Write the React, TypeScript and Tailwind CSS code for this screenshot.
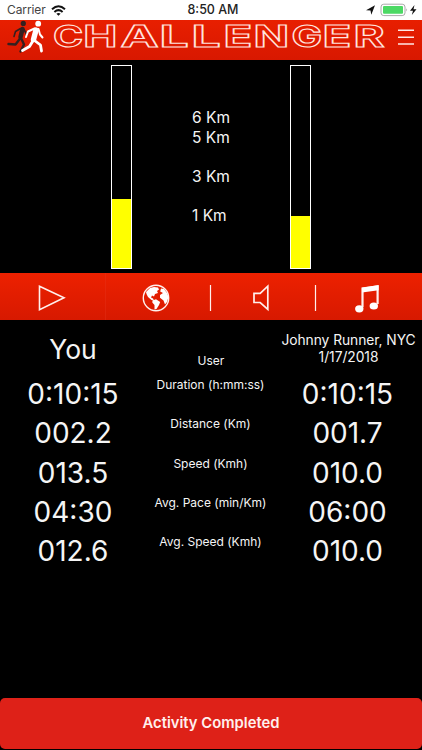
import React from "react";

interface Stat {
  label: string;
  you: string;
  rival: string;
}

const stats: Stat[] = [
  { label: "Duration (h:mm:ss)", you: "0:10:15", rival: "0:10:15" },
  { label: "Distance (Km)", you: "002.2", rival: "001.7" },
  { label: "Speed (Kmh)", you: "013.5", rival: "010.0" },
  { label: "Avg. Pace (min/Km)", you: "04:30", rival: "06:00" },
  { label: "Avg. Speed (Kmh)", you: "012.6", rival: "010.0" },
];

// letter, left edge, horizontal stretch
const logo: [string, number, number][] = [
  ["C", 53, 1.36],
  ["H", 83.3, 1.52],
  ["A", 120.5, 1.7],
  ["L", 159.4, 1.72],
  ["L", 191.4, 1.72],
  ["E", 223.4, 1.58],
  ["N", 253.4, 1.56],
  ["G", 291.5, 1.36],
  ["E", 322.4, 1.58],
  ["R", 353.4, 1.58],
];

const StatusBar = () => (
  <div className="flex h-5 items-center bg-white text-[#222]">
    <div className="flex w-[141px] items-center gap-[5px] pl-[7px]">
      <span className="text-[12px] leading-5 tracking-[-0.1px] text-[#444]">Carrier</span>
      <svg width="15" height="11" viewBox="0 0 15 11" fill="none" stroke="#111" strokeWidth="2">
        <path d="M1 4.2Q7.5-1.6 14 4.2M3.4 6.9Q7.5 3.4 11.6 6.9" />
        <path d="M5.4 8.8Q7.5 7.2 9.6 8.8L7.5 10.8z" fill="#111" stroke="none" />
      </svg>
    </div>
    <div className="w-[144px] text-center text-[12.5px] leading-5 font-medium">8:50 AM</div>
    <div className="flex flex-1 items-center justify-end pr-[4px]">
      <svg width="53" height="14" viewBox="0 0 53 14">
        <path d="M1 7.2L10 2.2 6.3 11.8 5.5 7.4z" fill="#111" />
        <rect x="16" y="1.2" width="24" height="11.4" rx="2.8" fill="white" stroke="#aaa" />
        <rect x="18" y="3" width="20" height="7.8" rx="1" fill="#4cd964" />
        <path d="M41.4 5.3q1.5 1.6 0 3.2z" fill="#999" />
        <path d="M49.5 2L45 7.7h3L46.8 12 51.5 6.3h-3z" fill="#111" />
      </svg>
    </div>
  </div>
);

const Header = () => (
  <header className="h-10 bg-gradient-to-b from-[#e81f00] to-[#d81800]">
    <svg className="overflow-visible" width="422" height="40" viewBox="0 0 422 40" fill="none">
      <g stroke="#35201f" strokeLinecap="round" strokeLinejoin="round">
        <circle cx="23.3" cy="3.4" r="2.6" fill="#35201f" stroke="none" />
        <path d="M22.5 9L20.5 17" strokeWidth="4.5" />
        <path d="M20.5 18L15.5 24.5 8.5 24" strokeWidth="2.4" />
        <path d="M21.5 19L24 24.5 20.5 31.5" strokeWidth="2.4" />
        <path d="M20.5 8.5L15.5 11.5 14 16.5M24 9.5L27 15" strokeWidth="1.6" />
      </g>
      <g stroke="white" strokeLinecap="round" strokeLinejoin="round">
        <circle cx="38.2" cy="3.7" r="2.9" fill="white" stroke="none" />
        <path d="M36 10L33.5 19.5" strokeWidth="5.4" />
        <path d="M33.5 20L29.5 26.5 22.5 30.5" strokeWidth="2.8" />
        <path d="M34.5 20.5L40.5 25 41.5 31" strokeWidth="2.8" />
        <path d="M34.5 8.5L28 11.5 26 17M38.5 9L40 14.5 42.5 17.5" strokeWidth="2" />
      </g>
      <g stroke="#ffe4df" strokeWidth="1.1" fontFamily="Inter, sans-serif" fontWeight="700" fontSize="30">
        {logo.map(([letter, x, stretch]) => (
          <text key={x} transform={`translate(${x} 27) scale(${stretch} 1)`}>
            {letter}
          </text>
        ))}
      </g>
      <path d="M398 10.3h16M398 17.2h16M398 24h16" stroke="#ffe8e4" strokeWidth="1.5" />
    </svg>
  </header>
);

const Bar = ({ percent }: { percent: number }) => (
  <div className="flex h-[204px] w-[21px] flex-col justify-end border border-white">
    <div className="bg-[#ffff00]" style={{ height: `${percent}%` }} />
  </div>
);

const Progress = () => (
  <section className="flex h-[213px] justify-between pt-[5px] pr-[111px] pl-[111px]">
    <Bar percent={34.4} />
    <div className="flex w-10 flex-col pl-px text-[15.5px] leading-5 whitespace-nowrap">
      <span className="mt-[43px]">6 Km</span>
      <span>5 Km</span>
      <span className="mt-[19px]">3 Km</span>
      <span className="mt-[19px]">1 Km</span>
    </div>
    <Bar percent={25.7} />
  </section>
);

const Toolbar = () => (
  <nav className="h-[47px] bg-gradient-to-b from-[#ed2100] to-[#d71900]">
    <svg width="422" height="47" viewBox="0 0 422 47" fill="none" stroke="#fff0ed">
      <path d="M39.5 13.2L64 24.8 39.5 36.7z" strokeWidth="1.6" />
      <path d="M105.5 0v47" stroke="#e73a25" strokeOpacity=".3" />
      <g transform="translate(156 25)">
        <circle r="12.7" strokeWidth="1.4" />
        <path
          d="M-10-6L-6-10-2-11 2-10.5 3-8.5 1-7 2-5-1-4-2-1.5-4-2.5-5-.5-3 .5-2 2.5-4.5 2-8-1-9.5-4zM-3.5 2.5L0 1.3 4.2 4 3 7 .5 11-1.5 11.5-1.5 7-3.7 4.5zM5-9.5L8-9 11-5 12.5-1 11 4 9 6.5 7.5 2.5 4-.2 4-3 7-5 4.2-6.5z"
          fill="white"
          stroke="none"
        />
      </g>
      <path d="M210.5 12v26M315.5 12v26" strokeWidth="1.2" />
      <path
        d="M254 20.4h6.2L267.8 13.2v23.2L260.2 29.5H254z"
        strokeWidth="1.7"
      />
      <path d="M362.5 34V15.5L377.6 13.5V31" strokeWidth="2.2" />
      <path d="M362 14.7L378.6 12v5.2L362 19.5z" fill="white" stroke="none" />
      <ellipse cx="359.3" cy="35.8" rx="4.2" ry="3.6" fill="white" stroke="none" />
      <ellipse cx="373.8" cy="33" rx="4.2" ry="3.6" fill="white" stroke="none" />
    </svg>
  </nav>
);

export default function App() {
  return (
    <div className="flex h-[750px] w-[422px] flex-col overflow-hidden bg-black font-['Inter',sans-serif] text-[#f5f5f5]">
      <StatusBar />
      <Header />
      <Progress />
      <Toolbar />

      <main className="flex flex-1 flex-col">
        <div className="grid h-[55px] grid-cols-[146px_129px_147px] text-center">
          <div className="pt-[11px] text-[26.5px] leading-9">You</div>
          <div className="pt-[33px] pl-px text-[12px] leading-4">User</div>
          <div className="pt-3 text-[13.8px] leading-[16.5px] tracking-[-0.05px] whitespace-nowrap">
            Johnny Runner, NYC
            <br />
            1/17/2018
          </div>
        </div>
        {stats.map((stat) => (
          <div
            key={stat.label}
            className="grid h-[39.3px] shrink-0 grid-cols-[146px_129px_147px] text-center"
          >
            <div className="text-[28px] leading-[39px]">{stat.you}</div>
            <div className="pt-[2px] text-[12px] leading-4 whitespace-nowrap">{stat.label}</div>
            <div className="pr-[2px] text-[28px] leading-[39px]">{stat.rival}</div>
          </div>
        ))}
      </main>

      <button className="mb-px h-[51px] rounded-[5px] bg-[#de2118] text-[14.8px] font-semibold text-[#fff0ee]">
        Activity Completed
      </button>
    </div>
  );
}
